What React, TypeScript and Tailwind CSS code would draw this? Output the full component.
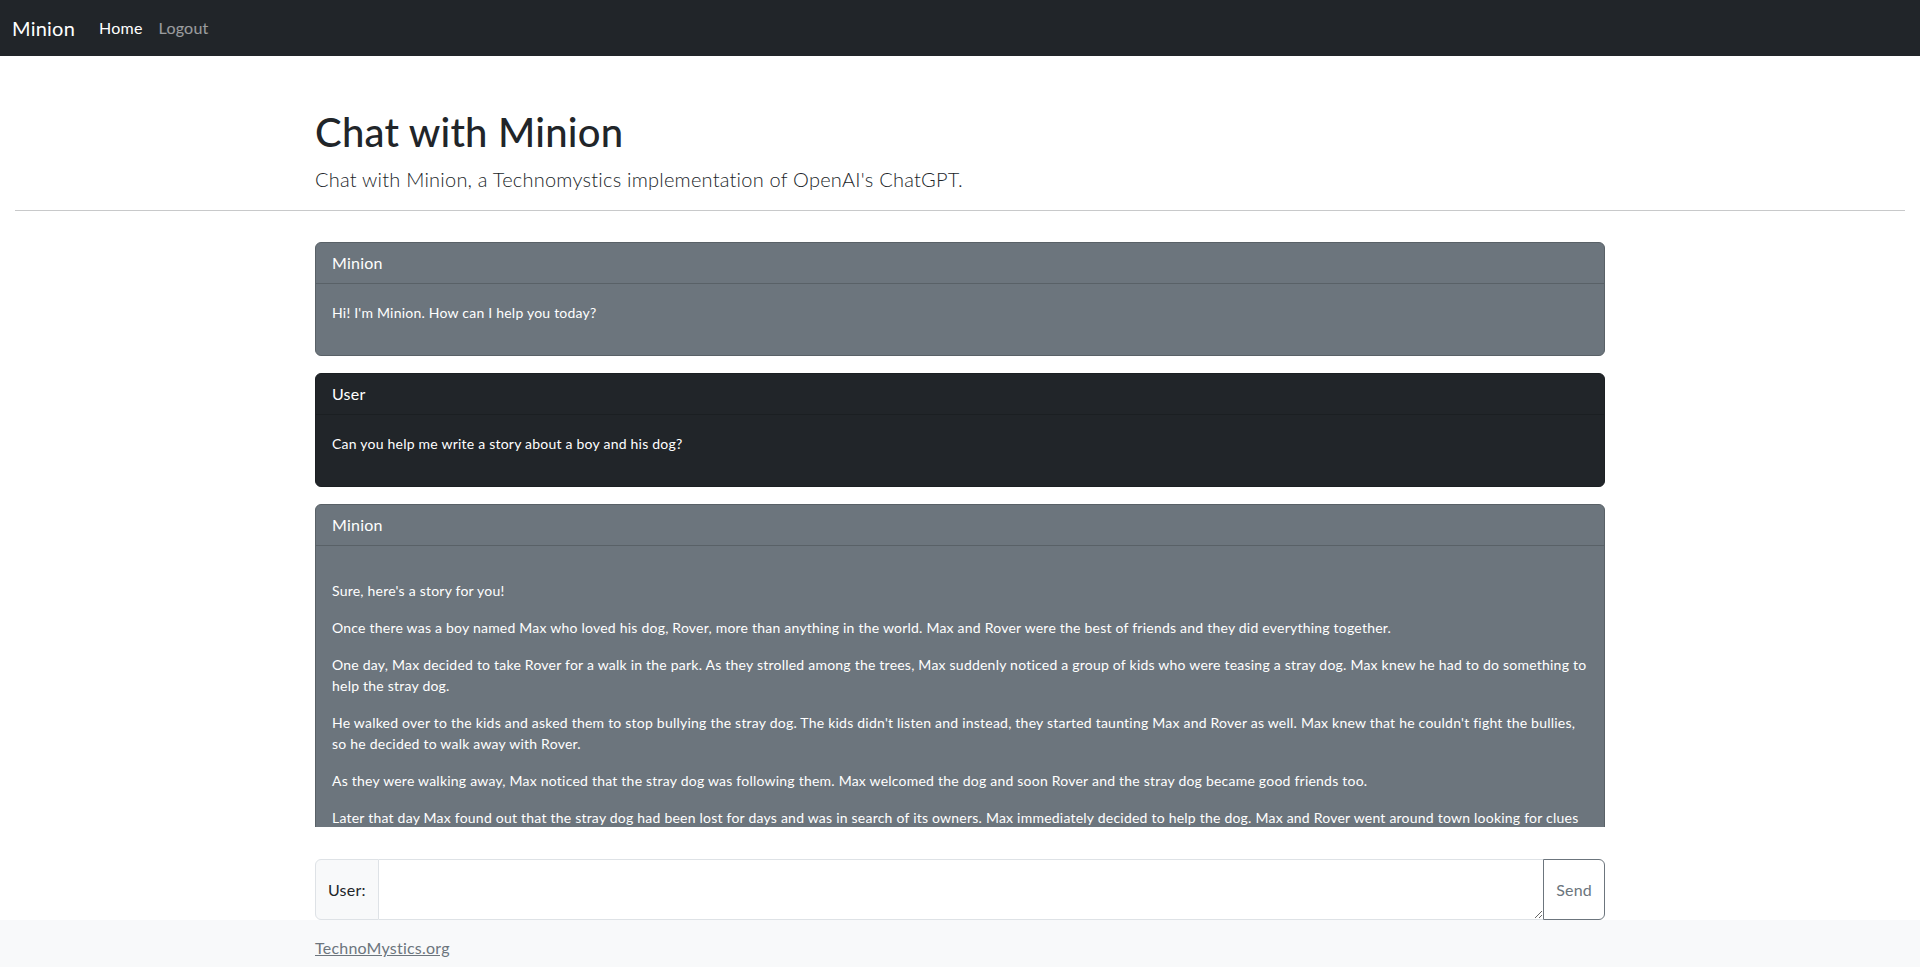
import React from "react";

const FONT = { fontFamily: "Lato, 'Liberation Sans', sans-serif" };

const story = [
  "Sure, here's a story for you!",
  "Once there was a boy named Max who loved his dog, Rover, more than anything in the world. Max and Rover were the best of friends and they did everything together.",
  "One day, Max decided to take Rover for a walk in the park. As they strolled among the trees, Max suddenly noticed a group of kids who were teasing a stray dog. Max knew he had to do something to help the stray dog.",
  "He walked over to the kids and asked them to stop bullying the stray dog. The kids didn't listen and instead, they started taunting Max and Rover as well. Max knew that he couldn't fight the bullies, so he decided to walk away with Rover.",
  "As they were walking away, Max noticed that the stray dog was following them. Max welcomed the dog and soon Rover and the stray dog became good friends too.",
  "Later that day Max found out that the stray dog had been lost for days and was in search of its owners. Max immediately decided to help the dog. Max and Rover went around town looking for clues and eventually found the owners of the stray dog.",
  "The owners were so happy to have their dog back that they thanked Max and Rover and gave them a big reward. Max and Rover were so proud of themselves for doing the right thing.",
  "From that day on, Max and Rover were known as the heroes of the town.",
];

function Card({
  title,
  dark,
  children,
  spacer,
}: {
  title: string;
  dark?: boolean;
  children: React.ReactNode;
  spacer?: boolean;
}) {
  const border = dark ? "border-[#1b1f22]" : "border-[#596167]";
  const bg = dark ? "bg-[#212529]" : "bg-[#6c757d]";
  return (
    <div className={`shrink-0 rounded-[6px] border ${border} ${bg} text-white`}>
      <div className={`h-[41px] border-b ${border} px-4 py-2 text-[16px] leading-[24px]`}>{title}</div>
      <div className="px-4 pt-[18px] pb-4">
        {spacer && <div className="h-4" />}
        {children}
      </div>
    </div>
  );
}

export default function App() {
  return (
    <div
      className="flex h-[967px] flex-col overflow-hidden bg-white tracking-[0.014em] text-[#212529]"
      style={FONT}
    >
      <nav className="flex h-[56px] shrink-0 items-center bg-[#212529] px-3">
        <span className="mr-4 text-[20px] leading-[30px] text-white">Minion</span>
        <a className="px-2 text-[16px] leading-[24px] text-white">Home</a>
        <a className="px-2 text-[16px] leading-[24px] text-white/55">Logout</a>
      </nav>

      <div className="mx-auto w-[1290px] pt-[52px]">
        <h1 className="mb-2 text-[40px] font-medium leading-[48px]">Chat with Minion</h1>
        <p className="mb-4 text-[20px] font-light leading-[30px]">
          Chat with Minion, a Technomystics implementation of OpenAI's ChatGPT.
        </p>
      </div>
      <hr className="mx-[15px] border-t border-[#c8c9ca]" />

      <div className="mx-auto mt-4 flex h-[600px] w-[1290px] flex-col gap-[17px] overflow-hidden pt-[15px]">
        <Card title="Minion">
          <p className="mb-4 text-[14px] leading-[21px]">Hi! I'm Minion. How can I help you today?</p>
        </Card>
        <Card title="User" dark>
          <p className="mb-4 text-[14px] leading-[21px]">Can you help me write a story about a boy and his dog?</p>
        </Card>
        <Card title="Minion" spacer>
          {story.map((s, i) => (
            <p key={i} className="mb-4 text-[14px] leading-[21px]">
              {s}
            </p>
          ))}
        </Card>
      </div>

      <div className="mx-auto mt-8 flex h-[61px] w-[1290px] shrink-0">
        <span className="flex items-center rounded-l-[6px] border border-[#dee2e6] bg-[#f8f9fa] px-3 text-[16px] leading-[24px]">
          User:
        </span>
        <textarea
          aria-label="message"
          className="min-w-0 flex-1 border-y border-[#dee2e6] bg-white px-3 py-1.5 text-[16px] outline-none"
          rows={2}
        />
        <button className="rounded-r-[6px] border border-[#6c757d] bg-white px-3 text-[16px] leading-[24px] text-[#6c757d]">
          Send
        </button>
      </div>

      <footer className="h-[47px] shrink-0 bg-[#f8f9fa] pt-4">
        <div className="mx-auto w-[1290px]">
          <a className="text-[16px] leading-[24px] text-[#6c757d] underline">TechnoMystics.org</a>
        </div>
      </footer>
    </div>
  );
}
